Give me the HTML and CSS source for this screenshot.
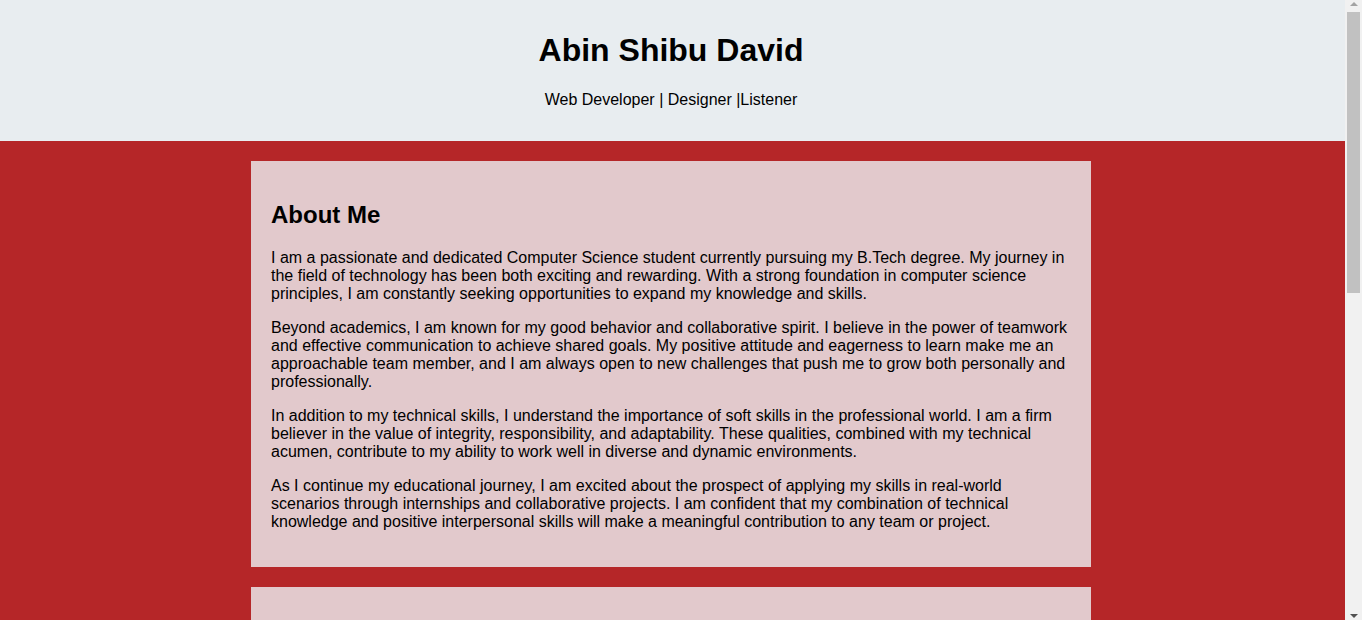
FILE: index.html
```html
<!DOCTYPE html>
<html lang="en">
<head>
<meta charset="UTF-8">
<title>Abin Shibu David</title>
<link rel="stylesheet" href="styles.css">
</head>
<body>
<header class="site-header">
  <h1 class="name">Abin Shibu David</h1>
  <p class="tagline">Web Developer | Designer |Listener</p>
</header>
<main class="content">
  <section class="card">
    <h2 class="card-title">About Me</h2>
    <p>I am a passionate and dedicated Computer Science student currently pursuing my B.Tech degree. My journey in the field of technology has been both exciting and rewarding. With a strong foundation in computer science principles, I am constantly seeking opportunities to expand my knowledge and skills.</p>
    <p>Beyond academics, I am known for my good behavior and collaborative spirit. I believe in the power of teamwork and effective communication to achieve shared goals. My positive attitude and eagerness to learn make me an approachable team member, and I am always open to new challenges that push me to grow both personally and professionally.</p>
    <p>In addition to my technical skills, I understand the importance of soft skills in the professional world. I am a firm believer in the value of integrity, responsibility, and adaptability. These qualities, combined with my technical acumen, contribute to my ability to work well in diverse and dynamic environments.</p>
    <p>As I continue my educational journey, I am excited about the prospect of applying my skills in real-world scenarios through internships and collaborative projects. I am confident that my combination of technical knowledge and positive interpersonal skills will make a meaningful contribution to any team or project.</p>
  </section>
  <section class="card card-next" aria-hidden="true"></section>
</main>
<div class="fake-scrollbar" aria-hidden="true">
  <span class="sb-arrow sb-up"></span>
  <span class="sb-thumb"></span>
  <span class="sb-arrow sb-down"></span>
</div>
</body>
</html>
```

FILE: styles.css
```css
html, body {
  margin: 0;
  padding: 0;
}
body {
  font-family: "Liberation Sans", Arial, sans-serif;
  color: #000;
  background: #b52628;
  margin-right: 17px;
}
.site-header {
  background: #e8edf0;
  text-align: center;
  padding: 32px 3px 32px 0;
}
.name {
  margin: 0 0 22px;
  font-size: 32px;
  font-weight: bold;
}
.tagline {
  margin: 0;
  font-size: 16px;
}
.content {
  background: #b52628;
  padding: 20px 3px 20px 0;
  display: flex;
  flex-direction: column;
  align-items: center;
  gap: 20px;
}
.card {
  width: 800px;
  padding: 20px;
  background: #e2c9cc;
}
.card-next {
  height: 200px;
}
.card-title {
  font-size: 24px;
  margin: 19.92px 0;
}
.card p {
  font-size: 16px;
  margin: 16px 0;
}
.fake-scrollbar {
  position: fixed;
  top: 0;
  right: 0;
  width: 17px;
  height: 100vh;
  background: #f1f1f1;
}
.sb-thumb {
  position: absolute;
  left: 2px;
  top: 12px;
  width: 13px;
  height: 281px;
  background: #c1c1c1;
}
.sb-arrow {
  position: absolute;
  left: 5px;
  width: 0;
  height: 0;
  border-left: 4px solid transparent;
  border-right: 4px solid transparent;
}
.sb-up {
  top: 2px;
  border-bottom: 4px solid #a3a3a3;
}
.sb-down {
  bottom: 2px;
  border-top: 4px solid #505050;
}
```
